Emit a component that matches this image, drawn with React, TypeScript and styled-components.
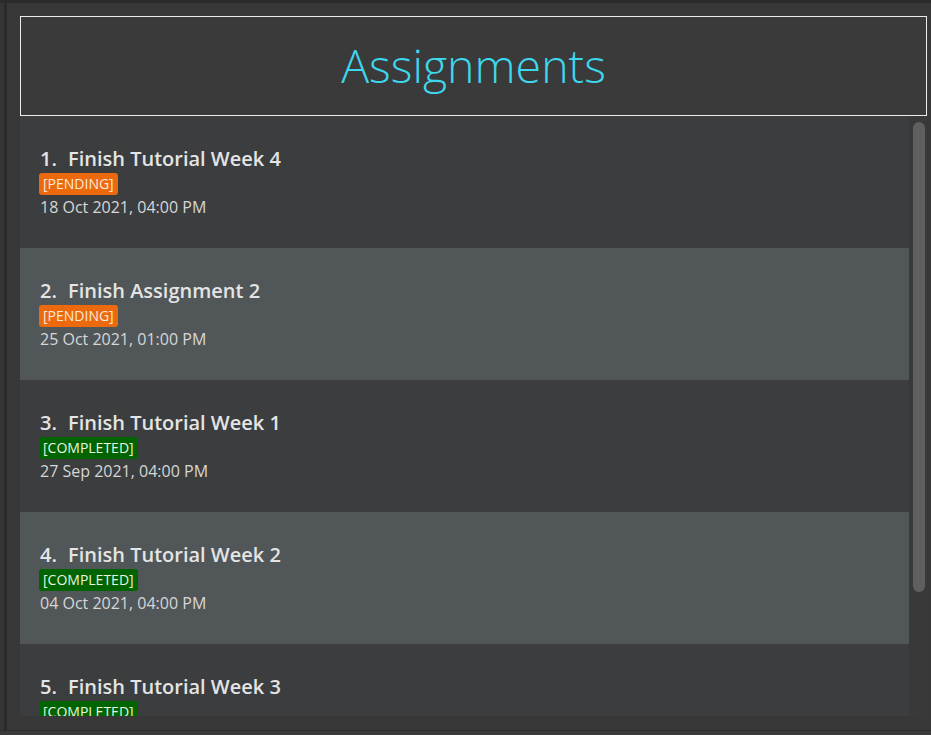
import * as React from 'react'
import styled, { createGlobalStyle } from 'styled-components'

const GlobalStyle = createGlobalStyle`
  html, body {
    margin: 0;
    padding: 0;
    background: #383838;
    font-family: 'Open Sans', 'Noto Sans', sans-serif;
  }
`

const Root = styled.div`
  width: 931px;
  height: 735px;
  display: flex;
  flex-direction: column;
  border-top: 3px solid #2b2b2b;
  box-sizing: border-box;
  overflow: hidden;
`

const Main = styled.div`
  flex: 1;
  display: flex;
  background: #353535;
  padding-left: 4px;
  border-bottom: 1px solid #2b2b2b;
`

const Panel = styled.div`
  flex: 1;
  display: flex;
  flex-direction: column;
  background: #383838;
  border-left: 3px solid #2b2b2b;
  padding: 13px 4px 14px 13px;
`

const Footer = styled.div`
  height: 4px;
  background: #3a3a3a;
`

const Header = styled.div`
  height: 100px;
  box-sizing: border-box;
  border: 1px solid #ececec;
  background: #3a3a3a;
  display: flex;
  align-items: center;
  justify-content: center;
`

const Title = styled.h1`
  margin: 0;
  font-weight: 300;
  font-size: 46.5px;
  color: #3dd8ee;
  line-height: 1;
  padding-bottom: 2px;
`

const ListArea = styled.div`
  height: 600px;
  display: flex;
  background: #393939;
`

const Rows = styled.div`
  flex: 1;
  overflow: hidden;
`

const Row = styled.div<{ $alt: boolean }>`
  height: 132px;
  box-sizing: border-box;
  padding: 30px 20px 0 20px;
  background: ${p => (p.$alt ? '#515658' : '#3c3d3f')};
  display: flex;
  flex-direction: column;
  align-items: flex-start;
`

const ItemTitle = styled.div`
  display: flex;
  font-size: 20px;
  font-weight: 600;
  color: #e4e4e4;
  line-height: 26px;
`

const Index = styled.span`
  width: 28px;
`

const Tag = styled.span<{ $done: boolean }>`
  margin-top: 1px;
  margin-left: -1px;
  padding: 0 4px;
  height: 22px;
  line-height: 22px;
  font-size: 14px;
  border-radius: 3px;
  color: ${p => (p.$done ? '#e9f5e0' : '#fbe8d8')};
  background: ${p => (p.$done ? '#006400' : '#ec6a0d')};
`

const DateText = styled.div`
  font-size: 16px;
  color: #d6d6d6;
  line-height: 25px;
`

const Track = styled.div`
  width: 18px;
  box-sizing: border-box;
  padding: 6px 2px 0 4px;
  background: #393939;
`

const Thumb = styled.div`
  height: 470px;
  border-radius: 6px;
  background: #5f5f5f;
`

const items = [
  { name: 'Finish Tutorial Week 4', done: false, date: '18 Oct 2021, 04:00 PM' },
  { name: 'Finish Assignment 2', done: false, date: '25 Oct 2021, 01:00 PM' },
  { name: 'Finish Tutorial Week 1', done: true, date: '27 Sep 2021, 04:00 PM' },
  { name: 'Finish Tutorial Week 2', done: true, date: '04 Oct 2021, 04:00 PM' },
  { name: 'Finish Tutorial Week 3', done: true, date: '11 Oct 2021, 04:00 PM' },
]

export default function App() {
  return (
    <Root>
      <GlobalStyle />
      <Main>
        <Panel>
          <Header>
            <Title>Assignments</Title>
          </Header>
          <ListArea>
            <Rows>
              {items.map((it, i) => (
                <Row key={i} $alt={i % 2 === 1}>
                  <ItemTitle>
                    <Index>{i + 1}.</Index>
                    <span>{it.name}</span>
                  </ItemTitle>
                  <Tag $done={it.done}>{it.done ? '[COMPLETED]' : '[PENDING]'}</Tag>
                  <DateText>{it.date}</DateText>
                </Row>
              ))}
            </Rows>
            <Track>
              <Thumb />
            </Track>
          </ListArea>
        </Panel>
      </Main>
      <Footer />
    </Root>
  )
}
